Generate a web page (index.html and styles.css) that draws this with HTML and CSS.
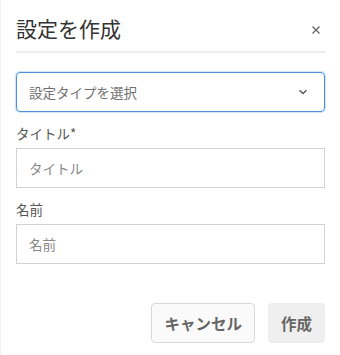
FILE: index.html
```html
<!DOCTYPE html>
<html lang="ja">
<head>
<meta charset="utf-8">
<link rel="stylesheet" href="styles.css">
</head>
<body>
<div class="modal">
  <div class="header">
    <h1 class="title">設定を作成</h1>
    <svg class="close" width="8" height="8" viewBox="0 0 8 8" aria-label="閉じる"><path d="M0.5 0.5 L7.5 7.5 M7.5 0.5 L0.5 7.5" stroke="#666" stroke-width="1.3"/></svg>
  </div>
  <div class="select">
    <span class="select-text">設定タイプを選択</span>
    <svg class="chev" width="10" height="6" viewBox="0 0 10 6"><path d="M1.5 1.2 L5 4.6 L8.5 1.2" fill="none" stroke="#555" stroke-width="1.4"/></svg>
  </div>
  <div class="field">
    <div class="label">タイトル*</div>
    <div class="input">タイトル</div>
  </div>
  <div class="field">
    <div class="label">名前</div>
    <div class="input">名前</div>
  </div>
  <div class="footer">
    <button class="btn cancel">キャンセル</button>
    <button class="btn create">作成</button>
  </div>
</div>
</body>
</html>
```
FILE: styles.css
```css
html, body {
  margin: 0;
  padding: 0;
  background: #fff;
}
body {
  font-family: "Noto Sans CJK JP", "Noto Sans", sans-serif;
  width: 340px;
  height: 355px;
  box-sizing: border-box;
  border-left: 1px solid #f2f2f2;
}
.modal {
  padding: 0 15px 0 15px;
}
.header {
  height: 53px;
  border-bottom: 2px solid #ededed;
  display: flex;
  align-items: center;
  justify-content: space-between;
  box-sizing: border-box;
}
.title {
  margin: 0;
  font-size: 21px;
  font-weight: 400;
  color: #333;
  line-height: 28px;
  padding-top: 4px;
}
.close {
  display: block;
  margin-right: 5px;
  margin-top: 9px;
}
.select {
  margin-top: 19px;
  height: 40px;
  border: 1px solid #4d90e0;
  box-shadow: 0 0 0 1px rgba(77,144,224,0.25);
  border-radius: 4px;
  box-sizing: border-box;
  display: flex;
  align-items: center;
  justify-content: space-between;
  padding: 0 16px 0 12px;
}
.select-text {
  font-size: 13.5px;
  color: #707070;
}
.chev {
  display: block;
}
.field {
  margin-top: 11px;
}
.label {
  font-size: 13.5px;
  color: #555;
  line-height: 20px;
  height: 20px;
}
.input {
  margin-top: 5px;
  height: 40px;
  border: 1px solid #d2d2d2;
  box-sizing: border-box;
  display: flex;
  align-items: center;
  padding: 0 12px;
  font-size: 13.5px;
  color: #888;
}
.footer {
  margin-top: 39px;
  display: flex;
  justify-content: flex-end;
  gap: 13px;
}
.btn {
  font-family: "Noto Sans CJK JP", "Noto Sans", sans-serif;
  font-size: 15.5px;
  font-weight: 700;
  color: #666;
  height: 40px;
  padding: 0 12px;
  border-radius: 4px;
  box-sizing: border-box;
}
.cancel {
  background: #fafafa;
  border: 1px solid #d8d8d8;
}
.create {
  background: #efefef;
  border: 1px solid #ececec;
}
```
